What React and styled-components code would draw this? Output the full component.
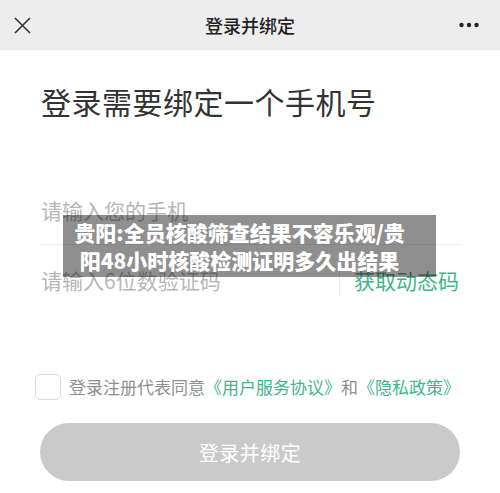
import React from 'react';
import styled, { createGlobalStyle } from 'styled-components';

const GlobalStyle = createGlobalStyle`
  html, body {
    margin: 0;
    padding: 0;
    background: #fff;
  }
  body {
    font-family: "Noto Sans CJK SC", "Noto Sans", sans-serif;
  }
  * {
    box-sizing: border-box;
  }
`;

const GREEN = '#3fb58a';

const Page = styled.div`
  position: relative;
  width: 500px;
  height: 493px;
  overflow: hidden;
  background: #fff;
`;

const NavBar = styled.header`
  height: 50px;
  background: #ededed;
  display: grid;
  grid-template-columns: 60px 1fr 60px;
  align-items: center;
`;

const NavButton = styled.button`
  border: 0;
  background: none;
  padding: 0;
  height: 50px;
  display: flex;
  align-items: center;
  justify-content: ${(p) => (p.$right ? 'flex-end' : 'flex-start')};
  padding-left: ${(p) => (p.$right ? '0' : '14px')};
  padding-right: ${(p) => (p.$right ? '21px' : '0')};
  cursor: pointer;
`;

const NavTitle = styled.h1`
  margin: 0;
  text-align: center;
  font-size: 18px;
  font-weight: 500;
  color: #1f1f1f;
  line-height: 50px;
`;

const Content = styled.main`
  padding: 0 40px 0 41px;
`;

const Heading = styled.h2`
  margin: 36px 0 59px;
  font-size: 30px;
  line-height: 30px;
  font-weight: 400;
  color: #333;
  letter-spacing: 0.5px;
`;

const Field = styled.div`
  height: 70px;
  display: flex;
  align-items: center;
  border-bottom: ${(p) => (p.$line ? '1px solid #ececec' : '0')};
`;

const Input = styled.input`
  flex: 1;
  min-width: 0;
  border: 0;
  outline: none;
  padding: 0;
  background: transparent;
  font-family: inherit;
  font-size: 21px;
  color: #333;
  &::placeholder {
    color: #b7b7b7;
  }
`;

const Divider = styled.span`
  width: 1px;
  height: 34px;
  background: #ececec;
  margin-right: 14px;
`;

const CodeLink = styled.a`
  font-size: 21px;
  color: ${GREEN};
  text-decoration: none;
  white-space: nowrap;
  margin-right: 1px;
`;

const Agreement = styled.label`
  margin: 59px 0 0 -6px;
  display: flex;
  align-items: center;
  gap: 8px;
  font-size: 17px;
  line-height: 26px;
  color: #8f8f8f;
  white-space: nowrap;
`;

const Box = styled.span`
  width: 26px;
  height: 26px;
  border: 1.5px solid #dadada;
  border-radius: 5px;
  flex: none;
`;

const Link = styled.span`
  color: ${GREEN};
`;

const Submit = styled.button`
  margin: 23px 0 0 -1px;
  width: 420px;
  height: 58px;
  border: 0;
  border-radius: 29px;
  background: #cacaca;
  color: #fff;
  font-family: inherit;
  font-size: 20px;
  letter-spacing: 0.5px;
`;

const Caption = styled.div`
  position: absolute;
  left: 63px;
  top: 215px;
  width: 373px;
  height: 62px;
  background: rgba(0, 0, 0, 0.44);
  color: #fff;
  font-size: 21px;
  font-weight: 900;
  line-height: 28px;
  text-align: center;
  padding: 3px 20px 0 0;
  white-space: nowrap;
`;

const CloseIcon = () => (
  <svg width="17" height="17" viewBox="0 0 17 17">
    <path d="M1 1L16 16M16 1L1 16" stroke="#333" strokeWidth="1.6" fill="none" />
  </svg>
);

const MoreIcon = () => (
  <svg width="20" height="6" viewBox="0 0 20 6">
    <circle cx="2.5" cy="3" r="2.2" fill="#222" />
    <circle cx="10" cy="3" r="2.2" fill="#222" />
    <circle cx="17.5" cy="3" r="2.2" fill="#222" />
  </svg>
);

const App = () => {
  return (
    <Page>
      <GlobalStyle />
      <NavBar>
        <NavButton aria-label="close">
          <CloseIcon />
        </NavButton>
        <NavTitle>登录并绑定</NavTitle>
        <NavButton $right aria-label="more">
          <MoreIcon />
        </NavButton>
      </NavBar>
      <Content>
        <Heading>登录需要绑定一个手机号</Heading>
        <Field $line>
          <Input placeholder="请输入您的手机" />
        </Field>
        <Field>
          <Input placeholder="请输入6位数验证码" />
          <Divider />
          <CodeLink>获取动态码</CodeLink>
        </Field>
        <Agreement>
          <Box />
          <span>
            登录注册代表同意<Link>《用户服务协议》</Link>和<Link>《隐私政策》</Link>
          </span>
        </Agreement>
        <Submit>登录并绑定</Submit>
      </Content>
      <Caption>
        贵阳:全员核酸筛查结果不容乐观/贵
        <br />
        阳48小时核酸检测证明多久出结果
      </Caption>
    </Page>
  );
};

export default App;
